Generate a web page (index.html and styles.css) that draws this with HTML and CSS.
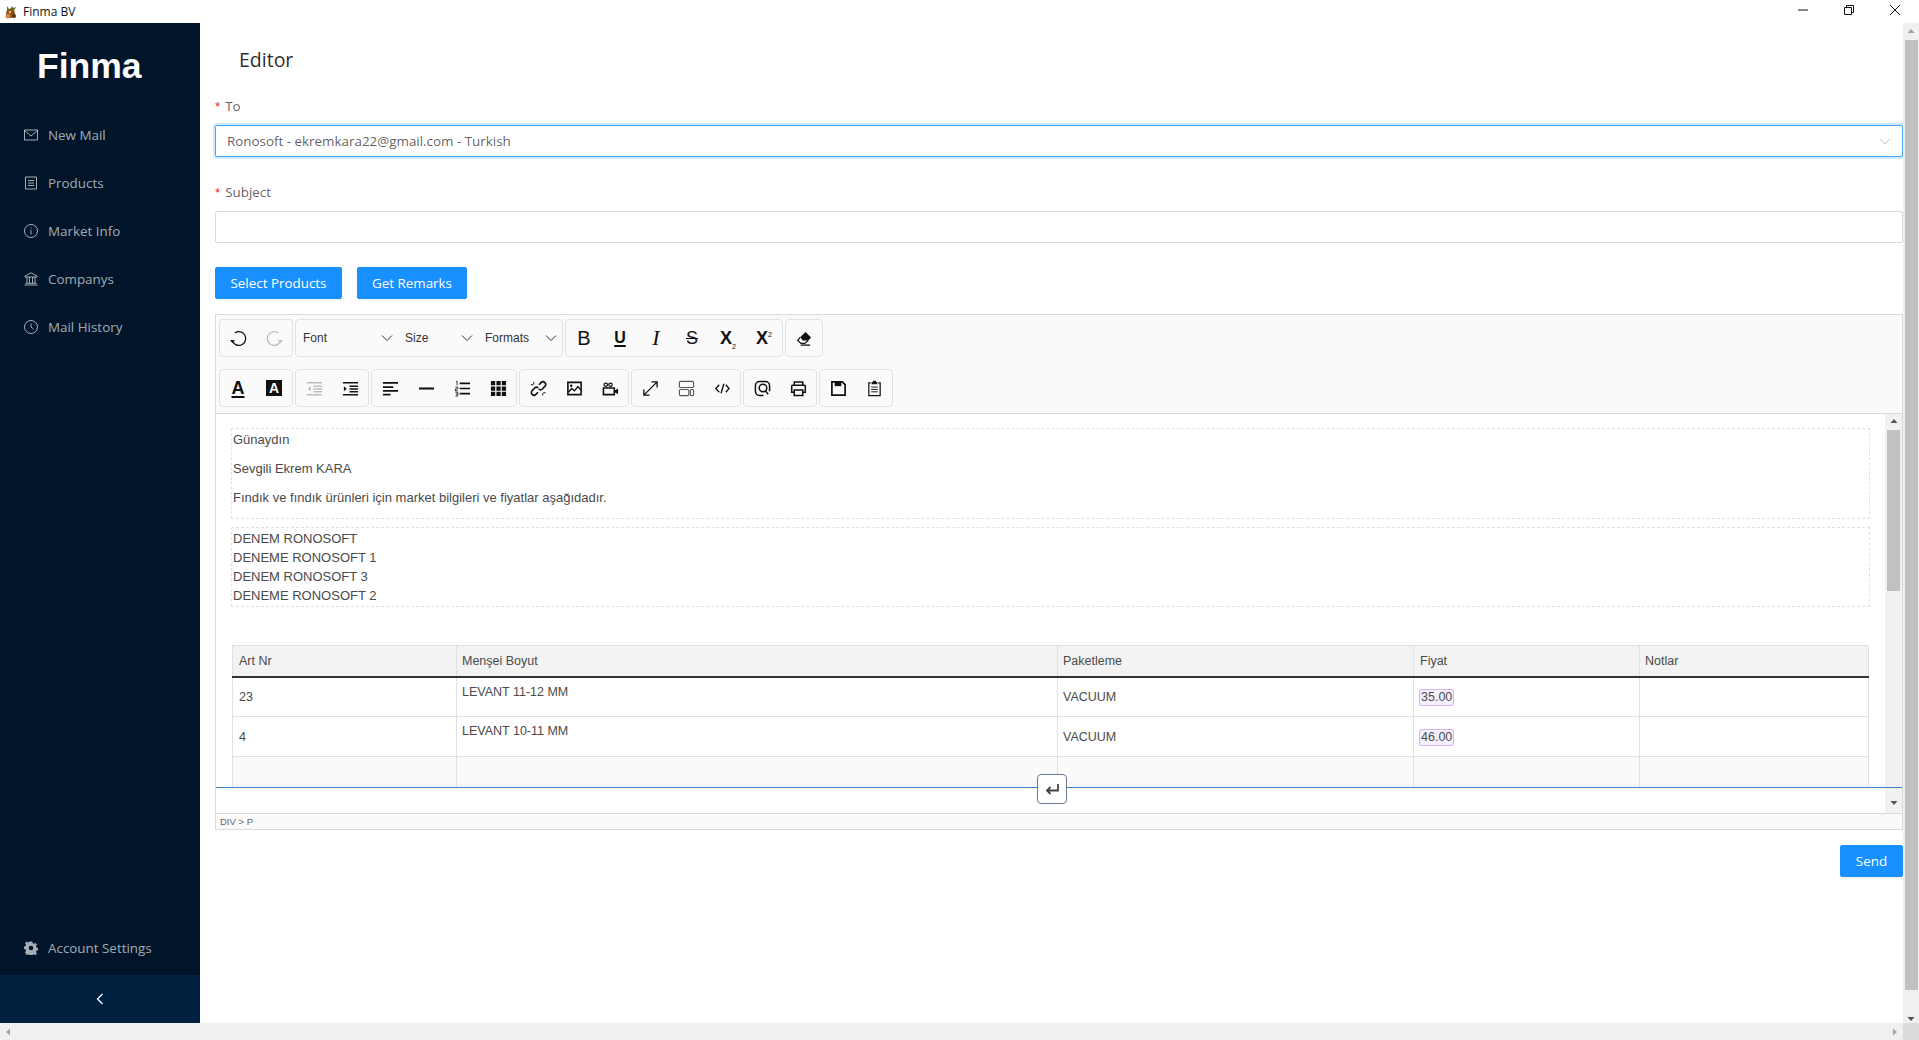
FILE: index.html
```html
<!DOCTYPE html>
<html lang="tr">
<head>
  <meta charset="UTF-8">
  <title>Finma BV</title>
  <link rel="stylesheet" href="styles.css">
</head>
<body>

<!-- window title bar -->
<div class="titlebar">
  <div class="app-name">
    <svg class="app-icon" viewBox="0 0 14 14"><path d="M3 1l2 3 2-1 1-2 1 2 3-1-2 4H3z" fill="#5d7a2e"/><circle cx="6.5" cy="8.5" r="4.5" fill="#8a4f1d"/><circle cx="4" cy="11" r="2.5" fill="#c98a3c"/><circle cx="10" cy="11" r="2" fill="#5b3312"/><circle cx="6" cy="7" r="1.2" fill="#e8c48a"/></svg>
    <span>Finma BV</span>
  </div>
  <div class="win-btns">
    <svg viewBox="0 0 12 12"><path d="M1 6h10" stroke="#111" fill="none"/></svg>
    <svg viewBox="0 0 12 12"><path d="M1.5 3.5h7v7h-7zM3.5 3.5v-2h7v7h-2" stroke="#111" fill="none"/></svg>
    <svg viewBox="0 0 12 12"><path d="M1 1l10 10M11 1L1 11" stroke="#111" fill="none"/></svg>
  </div>
</div>

<div class="middle">
  <aside class="sider">
    <div class="logo">Finma</div>
    <ul class="menu">
      <li><svg class="mi" viewBox="0 0 14 14"><path d="M.5 2h13v10H.5zM.5 2.500L7 8l6.500-5.500"/></svg>New Mail</li>
      <li><svg class="mi" viewBox="0 0 14 14"><path d="M1.500 1h11v12h-11zM4 4.500h6M4 7h6M4 9.500h6"/></svg>Products</li>
      <li><svg class="mi" viewBox="0 0 14 14"><circle cx="7" cy="7" r="6.500"/><path d="M7 6v4.500M7 3.500v1.200"/></svg>Market Info</li>
      <li><svg class="mi" viewBox="0 0 14 14"><path d="M7 .8L1 4v1h12V4zM.5 13h13M1.500 11.300h11M3 5v6M5.500 5v6M8.500 5v6M11 5v6"/></svg>Companys</li>
      <li><svg class="mi" viewBox="0 0 14 14"><circle cx="7" cy="7" r="6.500"/><path d="M7 3.500V7l2.500 2"/></svg>Mail History</li>
    </ul>
    <div class="menu-bottom">
      <svg class="mi mi-fill" viewBox="0 0 14 14"><path fill-rule="evenodd" d="M5.700.5h2.600l.4 1.700 1.300.6 1.500-.9 1.500 1.800-1 1.400.4 1.400 1.600.6v2.100l-1.600.6-.4 1.400 1 1.400-1.500 1.600-1.500-.9-1.300.6-.4 1.600H5.700l-.4-1.600-1.300-.6-1.500.9L1 11.200l1-1.400-.4-1.400L0 7.800V5.700l1.600-.6.400-1.400-1-1.400 1.500-1.800 1.500.9 1.300-.6zM7 4.700a2.300 2.300 0 1 0 0 4.600 2.300 2.300 0 0 0 0-4.600z"/></svg>
      Account Settings
    </div>
    <div class="collapse-btn"><svg viewBox="0 0 10 12"><path d="M7.500 1L2.500 6l5 5" stroke="#fff" stroke-width="1.300" fill="none"/></svg></div>
  </aside>

  <main class="content">
    <h2 class="page-title">Editor</h2>

    <div class="field">
      <label class="req">To</label>
      <div class="select-box">
        <span>Ronosoft - ekremkara22@gmail.com - Turkish</span>
        <svg viewBox="0 0 12 12"><path d="M1 3.500l5 5.500 5-5.500" stroke="#bfbfbf" fill="none"/></svg>
      </div>
    </div>

    <div class="field">
      <label class="req">Subject</label>
      <div class="text-input"></div>
    </div>

    <div class="actions">
      <button class="btn select-products">Select Products</button>
      <button class="btn get-remarks">Get Remarks</button>
    </div>

    <div class="editor">
      <div class="toolbar">
        <div class="tool-row">
          <div class="group">
            <span class="tb"><svg class="ic thin" viewBox="0 0 18 18"><path d="M3 10.500a6.500 6.500 0 1 0 2.500-6.700"/><path class="solid" d="M1 10.500h4.500l-2.200 3z"/></svg></span>
            <span class="tb off"><svg class="ic thin" viewBox="0 0 18 18"><path d="M15 10.500a6.500 6.500 0 1 1-2.500-6.700"/><path class="solid" d="M12.500 10.500H17l-2.200 3z"/></svg></span>
          </div>
          <div class="group">
            <span class="tb-sel w-font">Font<svg viewBox="0 0 12 12"><path d="M1 3.500l5 5 5-5"/></svg></span>
            <span class="tb-sel w-size">Size<svg viewBox="0 0 12 12"><path d="M1 3.500l5 5 5-5"/></svg></span>
            <span class="tb-sel w-formats">Formats<svg viewBox="0 0 12 12"><path d="M1 3.500l5 5 5-5"/></svg></span>
          </div>
          <div class="group">
            <span class="tb glyph g-b">B</span>
            <span class="tb glyph g-u">U</span>
            <span class="tb glyph g-i">I</span>
            <span class="tb glyph g-s">S</span>
            <span class="tb glyph g-x"><span>X<sub>2</sub></span></span>
            <span class="tb glyph g-x"><span>X<sup>2</sup></span></span>
          </div>
          <div class="group">
            <span class="tb"><svg class="ic" viewBox="0 0 18 18"><path class="solid" d="M10 2l6 6-3 3H7L4.700 7.500z"/><path d="M4.700 7.500L1.800 11l3.500 3.200h4l3.700-3.200" stroke-width="1.400"/><path d="M5 16h10" stroke-width="1.400"/></svg></span>
          </div>
        </div>
        <div class="tool-row">
          <div class="group">
            <span class="tb glyph g-a">A</span>
            <span class="tb"><span class="g-abg">A</span></span>
          </div>
          <div class="group">
            <span class="tb off"><svg class="ic" viewBox="0 0 18 18"><path d="M1 3h16M8 6.500h9M8 9.500h9M8 12.500h9M1 15.500h16" stroke-width="1.600"/><path class="solid" d="M5 6.500v5.500L2 9.200z"/></svg></span>
            <span class="tb"><svg class="ic" viewBox="0 0 18 18"><path d="M1 3h16M8 6.500h9M8 9.500h9M8 12.500h9M1 15.500h16" stroke-width="1.600"/><path class="solid" d="M2 6.500v5.500l3-2.800z"/></svg></span>
          </div>
          <div class="group">
            <span class="tb"><svg class="ic" viewBox="0 0 18 18"><path d="M1 3h16M1 7.500h11M1 11.500h16M1 15.500h8"/></svg></span>
            <span class="tb"><svg class="ic" viewBox="0 0 18 18"><path d="M1 9h16" stroke-width="2.200"/></svg></span>
            <span class="tb"><svg class="ic" viewBox="0 0 18 18"><path d="M6 3.500h11M6 9h11M6 14.500h11"/><path d="M2 1.500h1.300v4M1.500 7.500h2.500v2H1.500v2h2.500M1.500 13h2.500v4H1.500M2 15h2" stroke-width=".9"/></svg></span>
            <span class="tb"><svg class="ic" viewBox="0 0 18 18"><path class="solid" d="M1 1h4.500v4.500H1zM6.800 1h4.500v4.500H6.800zM12.500 1H17v4.500h-4.500zM1 6.800h4.500v4.500H1zM6.800 6.800h4.500v4.500H6.800zM12.500 6.800H17v4.500h-4.500zM1 12.500h4.500V17H1zM6.800 12.500h4.500V17H6.800zM12.500 12.500H17V17h-4.500z"/></svg></span>
          </div>
          <div class="group">
            <span class="tb"><svg class="ic" viewBox="0 0 18 18"><path d="M9.500 5l2.200-2.200a2.800 2.800 0 0 1 4 4L13 9.500a2.800 2.800 0 0 1-3.800 0M8.500 13l-2.200 2.200a2.800 2.800 0 0 1-4-4L5 8.500a2.800 2.800 0 0 1 3.800 0" stroke-width="1.700"/><path d="M4 2v2.500M1 5h2.500M14 13.500H16.500M13.500 14v2.500" stroke-width="1"/></svg></span>
            <span class="tb"><svg class="ic" viewBox="0 0 18 18"><path d="M2 2.500h14v13H2z" stroke-width="1.700"/><path d="M2.500 13l3.500-4 3 2.500 3.500-4.500 3.500 4" stroke-width="1.500"/><circle class="solid" cx="5.500" cy="6" r="1.300"/></svg></span>
            <span class="tb"><svg class="ic" viewBox="0 0 18 18"><path d="M1.500 8.500h11.500v7H1.500z" stroke-width="1.700"/><path class="solid" d="M13.500 11l3.500-2v6l-3.500-2z"/><circle cx="4" cy="5" r="1.800" stroke-width="1.300"/><circle cx="9" cy="5" r="1.800" stroke-width="1.300"/></svg></span>
          </div>
          <div class="group">
            <span class="tb"><svg class="ic" viewBox="0 0 18 18"><path d="M2.500 15.500L15.500 2.500M10 2h6v6M2 10v6h6" stroke-width="1.400"/></svg></span>
            <span class="tb off2"><svg class="ic" viewBox="0 0 18 18"><rect x="1.500" y="1.500" width="15" height="6.500" rx="1.500" stroke-width="1.200"/><rect x="1.500" y="10" width="10" height="6.500" rx="1.500" stroke-width="1.200"/><rect x="13" y="10" width="3.500" height="6.500" rx="1.500" stroke-width="1.200"/></svg></span>
            <span class="tb"><svg class="ic" viewBox="0 0 18 18"><path d="M5.500 5L2 9l3.500 4M12.500 5L16 9l-3.500 4M10.500 4l-3 10" stroke-width="1.400"/></svg></span>
          </div>
          <div class="group">
            <span class="tb"><svg class="ic" viewBox="0 0 18 18"><path d="M10 16.500H6a4.500 4.500 0 0 1-4.500-4.500V6A4.500 4.500 0 0 1 6 1.500h6A4.500 4.500 0 0 1 16.500 6v6" stroke-width="1.600"/><circle cx="9.500" cy="8.500" r="4" stroke-width="1.600"/><path d="M12 11.500l3 3.500" stroke-width="1.600"/></svg></span>
            <span class="tb"><svg class="ic" viewBox="0 0 18 18"><path d="M4.500 6V2h9v4M4.500 13H1.800V6.500a1 1 0 0 1 1-1h12.400a1 1 0 0 1 1 1V13h-2.700" stroke-width="1.600"/><path d="M4.500 10.500h9v6h-9z" stroke-width="1.600"/></svg></span>
          </div>
          <div class="group">
            <span class="tb"><svg class="ic" viewBox="0 0 18 18"><path d="M2 2h11l3 3v11H2z" stroke-width="1.800"/><path class="solid" d="M5 2h7v4.500H5z"/></svg></span>
            <span class="tb"><svg class="ic" viewBox="0 0 18 18"><path d="M5 3H3v13.500h12V3h-2" stroke-width="1.300"/><path class="solid" d="M6 2h1.500V.8h3V2H12v2.500H6z"/><path d="M5.500 7.500h7M5.500 10h7M5.500 12.500h7" stroke-width="1"/></svg></span>
          </div>
        </div>
      </div>

      <div class="edit-wrap">
        <div class="edit-area">
          <div class="block first">
            <p>Günaydın</p>
            <p>Sevgili Ekrem KARA</p>
            <p>Fındık ve fındık ürünleri için market bilgileri ve fiyatlar aşağıdadır.</p>
          </div>
          <div class="block second">
            DENEM RONOSOFT<br>
            DENEME RONOSOFT 1<br>
            DENEM RONOSOFT 3<br>
            DENEME RONOSOFT 2
          </div>
          <table class="prices">
            <colgroup>
              <col class="c1"><col class="c2"><col class="c3"><col class="c4"><col class="c5">
            </colgroup>
            <thead>
              <tr><th>Art Nr</th><th>Menşei Boyut</th><th>Paketleme</th><th>Fiyat</th><th>Notlar</th></tr>
            </thead>
            <tbody>
              <tr><td>23</td><td class="top">LEVANT 11-12 MM</td><td>VACUUM</td><td><span class="chip">35.00</span></td><td></td></tr>
              <tr><td>4</td><td class="top">LEVANT 10-11 MM</td><td>VACUUM</td><td><span class="chip">46.00</span></td><td></td></tr>
              <tr class="empty"><td></td><td></td><td></td><td></td><td></td></tr>
            </tbody>
          </table>
        </div>
        <div class="ed-scroll">
          <svg viewBox="0 0 8 6"><path d="M4 1l3.500 4h-7z" fill="#555"/></svg>
          <div class="ed-thumb"></div>
          <svg viewBox="0 0 8 6"><path d="M4 5L.5 1h7z" fill="#555"/></svg>
        </div>
        <div class="line-break"></div>
        <div class="line-btn"><svg viewBox="0 0 18 18"><path d="M15 4v6.500H4M7.500 7L4 10.500 7.500 14" stroke="#444" stroke-width="1.800" fill="none"/></svg></div>
      </div>

      <div class="statusbar">DIV &gt; P</div>
    </div>

    <div class="send-row"><button class="btn send">Send</button></div>
  </main>

  <div class="vscroll">
    <svg viewBox="0 0 8 6"><path d="M4 1l3.500 4h-7z" fill="#a3a3a3"/></svg>
    <div class="vthumb"></div>
    <svg viewBox="0 0 8 6"><path d="M4 5L.5 1h7z" fill="#505050"/></svg>
  </div>
</div>

<div class="hscroll">
  <svg viewBox="0 0 6 8"><path d="M1 4l4-3.500v7z" fill="#a3a3a3"/></svg>
  <svg viewBox="0 0 6 8"><path d="M5 4L1 .5v7z" fill="#a3a3a3"/></svg>
  <div class="corner"></div>
</div>

</body>
</html>
```

FILE: styles.css
```css
* {
  box-sizing: border-box;
}

html, body {
  margin: 0;
  padding: 0;
  height: 100%;
  overflow: hidden;
}

body {
  display: flex;
  flex-direction: column;
  background: #fff;
  font-family: "Open Sans", "Noto Sans", sans-serif;
  font-size: 13.400px;
  color: rgba(0, 0, 0, 0.65);
}

/* title bar */
.titlebar {
  height: 23px;
  flex: none;
  display: flex;
  justify-content: space-between;
  background: #fff;
}

.app-name {
  display: flex;
  align-items: center;
  gap: 5px;
  padding-left: 4px;
  font-size: 12px;
  color: #111;
}

.app-icon {
  width: 14px;
  height: 14px;
}

.win-btns {
  display: flex;
  gap: 34px;
  padding: 4px 18px 0 0;
}

.win-btns svg {
  width: 12px;
  height: 12px;
}

.middle {
  flex: 1;
  min-height: 0;
  display: flex;
}

/* sider */
.sider {
  width: 200px;
  flex: none;
  display: flex;
  flex-direction: column;
  background: #001529;
  color: rgba(255, 255, 255, 0.65);
}

.logo {
  height: 92px;
  padding: 19px 0 0 37px;
  font-family: "Liberation Sans", Arial, sans-serif;
  font-size: 35.500px;
  font-weight: bold;
  line-height: 48px;
  color: #fff;
}

.menu {
  list-style: none;
  margin: 0;
  padding: 0;
  flex: 1;
}

.menu li {
  height: 40px;
  margin-bottom: 8px;
  padding-left: 24px;
  display: flex;
  align-items: center;
}

.mi {
  width: 14px;
  height: 14px;
  margin-right: 10px;
  fill: none;
  stroke: rgba(255, 255, 255, 0.65);
  stroke-width: 1;
}

.mi-fill {
  fill: rgba(255, 255, 255, 0.65);
  stroke: none;
}

.menu-bottom {
  height: 40px;
  margin-bottom: 7px;
  padding-left: 24px;
  display: flex;
  align-items: center;
}

.collapse-btn {
  height: 48px;
  display: flex;
  align-items: center;
  justify-content: center;
  background: #002140;
}

.collapse-btn svg {
  width: 10px;
  height: 12px;
}

/* main */
.content {
  flex: 1;
  min-width: 0;
  padding-left: 15px;
}

.page-title {
  margin: 0;
  height: 72px;
  padding: 14px 0 0 24px;
  font-size: 19.500px;
  font-weight: 400;
  line-height: 45px;
  color: rgba(0, 0, 0, 0.85);
}

.field {
  margin-bottom: 24px;
}

.field label {
  display: block;
  height: 22px;
  margin-bottom: 8px;
  line-height: 22px;
}

.req::before {
  content: "*";
  margin-right: 5px;
  font-family: "Liberation Sans", sans-serif;
  color: #f5222d;
}

.select-box, .text-input {
  height: 32px;
  border: 1px solid #d9d9d9;
  border-radius: 2px;
  background: #fff;
}

.select-box {
  display: flex;
  align-items: center;
  justify-content: space-between;
  padding: 0 11px;
  border-color: #40a9ff;
  box-shadow: 0 0 0 2px rgba(24, 144, 255, 0.2);
}

.select-box svg {
  width: 12px;
  height: 12px;
}

.actions {
  display: flex;
  gap: 15px;
  margin-bottom: 15px;
}

.btn {
  height: 32px;
  padding: 0;
  border: 1px solid #1890ff;
  border-radius: 2px;
  background: #1890ff;
  color: #fff;
  font-family: inherit;
  font-size: 13.400px;
  box-shadow: 0 2px 0 rgba(0, 0, 0, 0.045);
}

.select-products {
  width: 127px;
}

.get-remarks {
  width: 110px;
}

/* editor */
.editor {
  border: 1px solid #dadada;
  font-family: "Liberation Sans", Arial, sans-serif;
  color: #333;
}

.toolbar {
  height: 99px;
  padding: 4px 3px 0;
  display: flex;
  flex-direction: column;
  gap: 12px;
  background: #fafafa;
  border-bottom: 1px solid #dadada;
}

.tool-row {
  display: flex;
  gap: 2px;
}

.group {
  height: 38px;
  display: flex;
  border: 1px solid #e1e1e1;
  border-radius: 4px;
}

.tb {
  width: 36px;
  height: 36px;
  display: flex;
  align-items: center;
  justify-content: center;
  color: #111;
}

.ic {
  width: 17px;
  height: 17px;
  fill: none;
  stroke: #111;
  stroke-width: 1.800;
}

.ic.thin {
  width: 19px;
  height: 19px;
  stroke-width: 1.200;
}

.ic .solid {
  fill: #111;
  stroke: none;
}

.off .ic {
  stroke: #bdbdbd;
}

.off .ic .solid {
  fill: #bdbdbd;
}

.off2 .ic {
  stroke: #555;
}

.tb-sel {
  height: 36px;
  display: flex;
  align-items: center;
  justify-content: space-between;
  padding: 0 5px 0 7px;
  font-size: 12px;
  color: #333;
}

.tb-sel svg {
  width: 12px;
  height: 12px;
  fill: none;
  stroke: #333;
}

.w-font {
  width: 102px;
}

.w-size {
  width: 80px;
}

.w-formats {
  width: 84px;
}

.glyph {
  font-family: "Liberation Sans", Arial, sans-serif;
  line-height: 1;
}

.g-b {
  font-size: 20px;
}

.g-u {
  font-size: 16px;
  font-weight: bold;
  text-decoration: underline;
  text-decoration-thickness: 2px;
  text-underline-offset: 2px;
}

.g-i {
  font-family: "Liberation Serif", serif;
  font-size: 22px;
  font-style: italic;
}

.g-s {
  font-size: 18px;
  text-decoration: line-through;
}

.g-x {
  font-size: 18px;
  font-weight: bold;
}

.g-x sub, .g-x sup {
  font-size: 7px;
  font-weight: normal;
  line-height: 0;
}

.g-a {
  font-size: 18px;
  font-weight: bold;
  text-decoration: underline;
  text-decoration-thickness: 2px;
  text-underline-offset: 2px;
}

.g-abg {
  width: 16px;
  height: 16px;
  background: #111;
  color: #fff;
  font-size: 14px;
  font-weight: bold;
  line-height: 16px;
  text-align: center;
}

.edit-wrap {
  height: 399px;
  position: relative;
  display: flex;
  background: #fff;
}

.edit-area {
  flex: 1;
  min-width: 0;
  position: relative;
  overflow: hidden;
  padding: 14px 15px 0;
  font-size: 13px;
  line-height: 19px;
  color: #4a4a4a;
}

/* hides the table under the line-break bar */
.edit-area::after {
  content: "";
  position: absolute;
  left: 0;
  right: 0;
  top: 373px;
  bottom: 0;
  background: #fff;
}

.block {
  border: 1px dashed #e1e1e1;
  padding: 1px;
}

.block p {
  margin: 0 0 10px;
}

.first {
  height: 91px;
  margin-bottom: 8px;
}

.second {
  height: 80px;
  margin-bottom: 38px;
}

.prices {
  width: 1636px;
  margin-left: 1px;
  border-collapse: collapse;
  table-layout: fixed;
  font-size: 12.500px;
}

.c1 { width: 224px; }
.c2 { width: 601px; }
.c3 { width: 356px; }
.c4 { width: 226px; }
.c5 { width: 229px; }

.prices th, .prices td {
  border: 1px solid #e1e1e1;
  padding: 1px 5px 0;
  font-weight: normal;
  text-align: left;
}

.prices th:first-child, .prices td:first-child, .prices th:nth-child(4) {
  padding-left: 6px;
}

.prices th {
  height: 31px;
  background: #f3f3f3;
  border-bottom: 2px solid #333;
}

.prices td {
  height: 40px;
}

.prices td.top {
  vertical-align: top;
  padding-top: 5px;
}

.prices .empty td {
  background: #fafafa;
}

.chip {
  display: inline-block;
  height: 17px;
  padding: 0 1px;
  line-height: 15px;
  border: 1px solid #d4b5f5;
  border-radius: 2px;
  background: #f6efff;
}

.line-break {
  position: absolute;
  left: 0;
  right: 0;
  top: 373px;
  height: 1px;
  background: #3f7fcf;
}

.line-btn {
  position: absolute;
  left: 821px;
  top: 360px;
  width: 30px;
  height: 30px;
  display: flex;
  align-items: center;
  justify-content: center;
  border: 1px solid #6b7a90;
  border-radius: 4px;
  background: #fff;
}

.line-btn svg {
  width: 18px;
  height: 18px;
}

.ed-scroll {
  width: 17px;
  flex: none;
  display: flex;
  flex-direction: column;
  align-items: center;
  background: #f1f1f1;
}

.ed-scroll svg {
  width: 8px;
  height: 6px;
  margin: 4px 0 5px;
  flex: none;
}

.ed-scroll svg:last-child {
  margin-bottom: 7px;
}

.ed-thumb {
  width: 13px;
  height: 161px;
  margin: 1px 0 auto;
  background: #c1c1c1;
}

.statusbar {
  height: 16px;
  padding-left: 4px;
  border-top: 1px solid #dadada;
  background: #fafafa;
  font-size: 9.500px;
  line-height: 15px;
  color: #666;
}

.send-row {
  display: flex;
  justify-content: flex-end;
  margin-top: 15px;
}

.send {
  width: 63px;
}

/* window scrollbars */
.vscroll {
  width: 16px;
  flex: none;
  display: flex;
  flex-direction: column;
  align-items: center;
  background: #f0f0f0;
}

.vscroll svg {
  width: 8px;
  height: 6px;
  margin-top: 5px;
  flex: none;
}

.vthumb {
  width: 13px;
  height: 950px;
  margin-top: 6px;
  margin-bottom: 21px;
  background: #c1c1c1;
}

.hscroll {
  height: 17px;
  flex: none;
  display: flex;
  align-items: center;
  padding-left: 5px;
  background: #f0f0f0;
}

.hscroll svg {
  width: 6px;
  height: 8px;
}

.hscroll svg:nth-child(2) {
  margin-left: auto;
  margin-right: 5px;
}

.corner {
  width: 16px;
  height: 17px;
  background: #dcdcdc;
}
```
